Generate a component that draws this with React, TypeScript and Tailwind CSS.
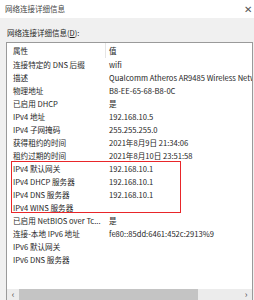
import React from "react";

const rows: [string, string][] = [
  ["连接特定的 DNS 后缀", "wifi"],
  ["描述", "Qualcomm Atheros AR9485 Wireless Network Adapter"],
  ["物理地址", "B8-EE-65-68-B8-0C"],
  ["已启用 DHCP", "是"],
  ["IPv4 地址", "192.168.10.5"],
  ["IPv4 子网掩码", "255.255.255.0"],
  ["获得租约的时间", "2021年8月9日 21:34:06"],
  ["租约过期的时间", "2021年8月10日 23:51:58"],
  ["IPv4 默认网关", "192.168.10.1"],
  ["IPv4 DHCP 服务器", "192.168.10.1"],
  ["IPv4 DNS 服务器", "192.168.10.1"],
  ["IPv4 WINS 服务器", ""],
  ["已启用 NetBIOS over Tc...", "是"],
  ["连接-本地 IPv6 地址", "fe80::85dd:6461:452c:2913%9"],
  ["IPv6 默认网关", ""],
  ["IPv6 DNS 服务器", ""],
];

export default function App() {
  return (
    <div
      className="w-[254px] h-[300px] overflow-hidden bg-[#f0f0f0] text-[#1e1e1e] flex flex-col"
      style={{ fontFamily: '"Noto Sans CJK SC", "Noto Sans", sans-serif' }}
    >
      <div className="h-[18px] shrink-0 bg-white flex items-center justify-between pl-[5px] pr-[2px] text-[7.5px] leading-none text-[#444]">
        <span>网络连接详细信息</span>
        <span className="text-[10px] text-[#555]">✕</span>
      </div>
      <div className="h-[19px] shrink-0 pl-[7px] pt-[10px] text-[7.5px] leading-[9px]">
        网络连接详细信息(<span className="underline">D</span>):
      </div>
      <div className="ml-[6px] mr-[1px] mt-[5px] flex-1 min-h-0 border-l border-r border-t border-[#9a9a9a] bg-white flex flex-col">
        <div className="h-[15px] shrink-0 flex items-center text-[7.5px]">
          <div className="w-[99px] shrink-0 pl-[6px] h-full flex items-center border-r border-[#e5e5e5]">属性</div>
          <div className="pl-[3px]">值</div>
        </div>
        <div className="flex-1 min-h-0 relative overflow-hidden">
          {rows.map(([k, v], i) => (
            <div key={i} className="h-[13px] flex items-center text-[7.6px] whitespace-nowrap overflow-hidden">
              <div className="w-[102px] shrink-0 pl-[6px] overflow-hidden">{k}</div>
              <div className="shrink-0">{v}</div>
            </div>
          ))}
          <div className="absolute left-[4px] top-[103px] w-[170px] h-[52px] border-[1.5px] border-[#e8262a]" />
        </div>
        <div className="h-[11px] shrink-0 bg-[#ececec] flex items-stretch text-[9px] leading-[9px] text-[#505050]">
          <div className="w-[12px] shrink-0 flex items-center justify-center">‹</div>
          <div className="w-[179px] shrink-0 bg-[#c4c4c4]" />
          <div className="flex-1" />
          <div className="w-[12px] shrink-0 flex items-center justify-center">›</div>
        </div>
      </div>
    </div>
  );
}
